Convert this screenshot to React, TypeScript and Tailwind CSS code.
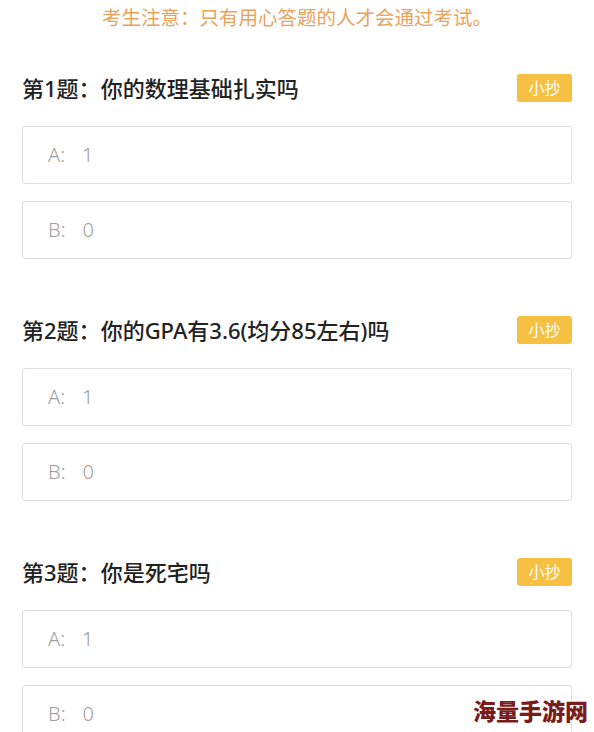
import React from 'react';

const questions = [
  { no: 1, title: '你的数理基础扎实吗' },
  { no: 2, title: '你的GPA有3.6(均分85左右)吗' },
  { no: 3, title: '你是死宅吗' },
];

const font = { fontFamily: '"Noto Sans", "Noto Sans CJK SC", sans-serif' };

function Option({ label, value }: { label: string; value: string }) {
  return (
    <div className="h-[58px] rounded-[3px] border border-[#dedede] bg-white flex items-center pl-[25px] text-[20px] text-[#9e9e9e] font-light">
      <span>{label}:</span>
      <span className="ml-[17px]">{value}</span>
    </div>
  );
}

export default function App() {
  return (
    <div className="relative w-[594px] h-[732px] overflow-hidden bg-white" style={font}>
      {/* notice */}
      <div className="pt-[5px] text-center text-[19.5px] leading-[26px] text-[#eaa35e]">
        考生注意：只有用心答题的人才会通过考试。
      </div>

      <div className="px-[22px] mt-[43px] flex flex-col gap-[57px]">
        {questions.map((q) => (
          <div key={q.no}>
            <div className="h-[28px] flex items-center justify-between">
              <span className="text-[22px] font-medium text-[#222]">
                第{q.no}题：{q.title}
              </span>
              <span className="w-[55px] h-[28px] rounded-[3px] bg-[#f6c143] text-white text-[16px] flex items-center justify-center">
                小抄
              </span>
            </div>
            <div className="mt-[24px] flex flex-col gap-[17px]">
              <Option label="A" value="1" />
              <Option label="B" value="0" />
            </div>
          </div>
        ))}
      </div>

      {/* watermark */}
      <div
        className="absolute right-[6px] bottom-[4px] text-[23px] font-black text-[#7a1c1c]"
        style={{ textShadow: '0 0 2px #fff, 0 0 2px #fff' }}
      >
        海量手游网
      </div>
    </div>
  );
}
